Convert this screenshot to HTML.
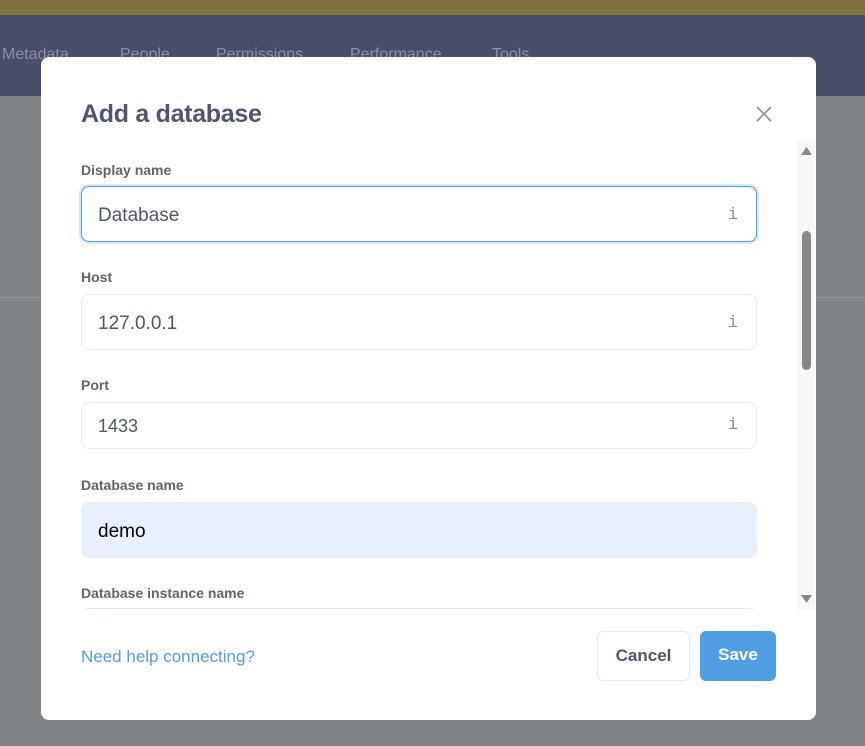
<!DOCTYPE html>
<html><head><style>
body{margin:0;width:865px;height:746px;overflow:hidden;background:#808385;font-family:"Liberation Sans",sans-serif;position:relative}
.top{position:absolute;left:0;top:0;width:865px;height:15px;background:#7f723f}
.nav{position:absolute;left:0;top:15px;width:865px;height:81px;background:#4a4e69;color:#8b8fa6;font-size:16px}
.nav span{position:absolute;top:31px}
.line{position:absolute;left:0;top:297px;width:865px;height:1px;background:#8d9092}
.modal{position:absolute;left:41px;top:57px;width:775px;height:663px;background:#fff;border-radius:8px;overflow:hidden}
h1{position:absolute;left:40px;top:43px;margin:0;font-size:25px;color:#4c5773;font-weight:bold;letter-spacing:-0.3px}
.x{position:absolute;left:714px;top:48px}
.lbl{position:absolute;left:40px;font-size:14px;font-weight:bold;color:#5e6573}
.inp{position:absolute;left:40px;width:676px;border:1px solid #e8eaed;border-radius:8px;box-sizing:border-box;font-size:19px;color:#4c5773;padding-left:16px}
.i{position:absolute;right:18px;font-family:"Liberation Mono",monospace;font-size:17px;color:#8b8f9a}
.sb{position:absolute;left:756px;top:83px;width:18px;height:470px;background:#f8f8f8}
.thumb{position:absolute;left:5px;top:91px;width:9px;height:139px;background:#888;border-radius:5px}
.btn{position:absolute;top:574px;height:50px;border-radius:6px;box-sizing:border-box;font-size:17px;font-weight:bold;text-align:center;line-height:48px}
</style></head><body>
<div class="top"></div>
<div class="nav"><span style="left:2px">Metadata</span><span style="left:120px">People</span><span style="left:216px">Permissions</span><span style="left:350px">Performance</span><span style="left:492px">Tools</span></div>
<div class="line"></div>
<div class="modal">
<h1>Add a database</h1>
<svg class="x" width="18" height="18" viewBox="0 0 18 18"><path d="M2 2L16 16M16 2L2 16" stroke="#8b8f9a" stroke-width="1.6" fill="none"/></svg>
<div class="lbl" style="top:105px">Display name</div>
<div class="inp" style="top:129px;height:56px;line-height:57px;border:1px solid #509ee3;box-shadow:0 0 0 2px #d6e8f8">Database<span class="i">i</span></div>
<div class="lbl" style="top:212px">Host</div>
<div class="inp" style="top:237px;height:56px;line-height:57px">127.0.0.1<span class="i">i</span></div>
<div class="lbl" style="top:320px">Port</div>
<div class="inp" style="top:345px;height:47px;line-height:46px;font-size:18px">1433<span class="i">i</span></div>
<div class="lbl" style="top:420px">Database name</div>
<div class="inp" style="top:445px;height:56px;line-height:57px;background:#e8f0fe;border-color:#e8f0fe;color:#000">demo</div>
<div class="lbl" style="top:528px">Database instance name</div>
<div class="inp" style="top:551px;height:40px;border-color:#dfeaf5"></div>
<div style="position:absolute;left:0;top:553px;width:756px;height:40px;background:#fff"></div>
<div class="sb"><svg style="position:absolute;left:4px;top:7px" width="11" height="9"><path d="M0 8L5.5 0L11 8Z" fill="#888"/></svg><div class="thumb"></div><svg style="position:absolute;left:4px;top:455px" width="11" height="9"><path d="M0 0L11 0L5.5 8Z" fill="#888"/></svg></div>
<div style="position:absolute;left:40px;top:590px;font-size:17px;color:#509ee3">Need help connecting?</div>
<div class="btn" style="left:556px;width:93px;border:1px solid #e8eaed;color:#4c5773">Cancel</div>
<div class="btn" style="left:659px;width:76px;background:#509ee3;color:#fff">Save</div>
</div>
</body></html>
